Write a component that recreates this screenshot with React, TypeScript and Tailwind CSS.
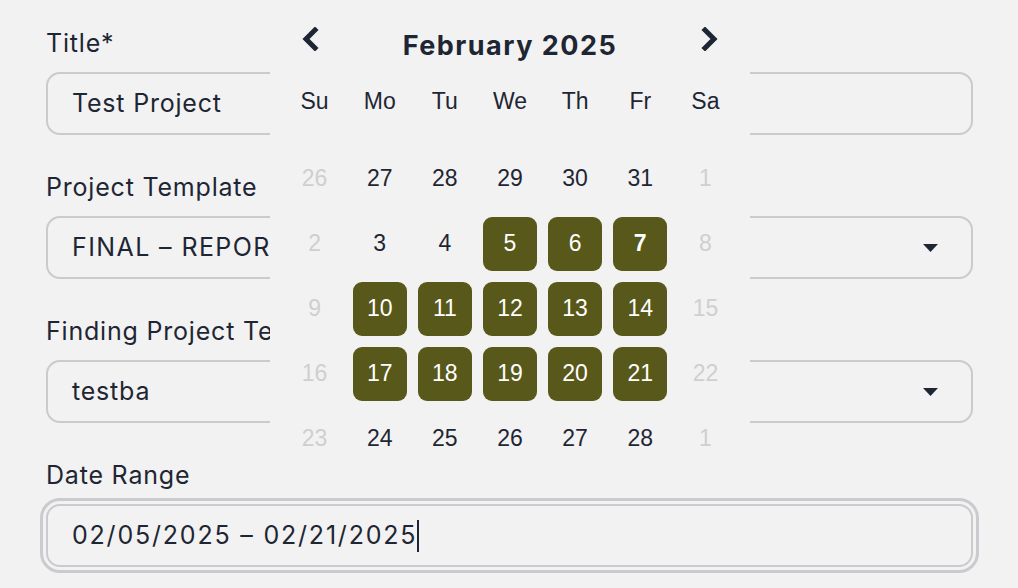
import React from "react";

const fieldFont = "font-['Inter','Noto_Sans',sans-serif]";
const calFont = "font-['Liberation_Sans','Arial',sans-serif]";

const weekdays = ["Su", "Mo", "Tu", "We", "Th", "Fr", "Sa"];

type Day = { n: number; muted?: boolean; selected?: boolean; bold?: boolean };

const weeks: Day[][] = [
  [{ n: 26, muted: true }, { n: 27 }, { n: 28 }, { n: 29 }, { n: 30 }, { n: 31 }, { n: 1, muted: true }],
  [{ n: 2, muted: true }, { n: 3 }, { n: 4 }, { n: 5, selected: true }, { n: 6, selected: true }, { n: 7, selected: true, bold: true }, { n: 8, muted: true }],
  [{ n: 9, muted: true }, { n: 10, selected: true }, { n: 11, selected: true }, { n: 12, selected: true }, { n: 13, selected: true }, { n: 14, selected: true }, { n: 15, muted: true }],
  [{ n: 16, muted: true }, { n: 17, selected: true }, { n: 18, selected: true }, { n: 19, selected: true }, { n: 20, selected: true }, { n: 21, selected: true }, { n: 22, muted: true }],
  [{ n: 23, muted: true }, { n: 24 }, { n: 25 }, { n: 26 }, { n: 27 }, { n: 28 }, { n: 1, muted: true }],
];

const Caret = () => (
  <svg width="15" height="8" viewBox="0 0 15 8" className="shrink-0">
    <path d="M0 0 H15 L7.5 8 Z" fill="#1f2633" />
  </svg>
);

const Chevron = ({ dir }: { dir: "left" | "right" }) => (
  <svg width="18" height="24" viewBox="0 0 18 24">
    <path
      d={dir === "left" ? "M14 3 L5 12 L14 21" : "M4 3 L13 12 L4 21"}
      fill="none"
      stroke="#1f2633"
      strokeWidth="5"
      strokeLinecap="square"
      strokeLinejoin="miter"
    />
  </svg>
);

const Field = ({
  label,
  children,
}: {
  label: string;
  children: React.ReactNode;
}) => (
  <div className="flex flex-col">
    <label className="text-[25px] leading-[32px] tracking-[0.8px] text-[#1f2633] mb-[13px] whitespace-nowrap">
      {label}
    </label>
    {children}
  </div>
);

const inputBox =
  "h-[63px] w-full rounded-[14px] border-2 border-[#cbcbcf] bg-[#f2f2f2] pl-[24px] flex items-center text-[25px] tracking-[0.8px] text-[#1f2633] whitespace-nowrap";

export default function App() {
  return (
    <div className={`relative w-[1018px] h-[588px] overflow-hidden bg-[#f2f2f2] ${fieldFont}`}>
      <div className="flex flex-col gap-[36px] pt-[27px] pl-[46px] pr-[45px]">
        <Field label="Title*">
          <div className={inputBox}>Test Project</div>
        </Field>
        <Field label="Project Template">
          <div className={`${inputBox} justify-between pr-[33px]`}>
            <span className="tracking-[1.4px]">FINAL – REPORT</span>
            <Caret />
          </div>
        </Field>
        <Field label="Finding Project Template">
          <div className={`${inputBox} justify-between pr-[33px]`}>
            <span>testba</span>
            <Caret />
          </div>
        </Field>
        <Field label="Date Range">
          <div className={`${inputBox} outline-[3px] outline-offset-[3px] outline-solid outline-[#cbcbcf]`}>
            <span className="tracking-[1.8px]">02/05/2025 – 02/21/2025</span>
            <span className="w-[2px] h-[32px] bg-[#1f2633]" />
          </div>
        </Field>
      </div>

      {/* calendar popover */}
      <div className="absolute left-[270px] top-0 w-[480px] h-[462px] bg-[#f2f2f2] px-[12px]">
        <div className="flex items-center justify-between h-[81px] px-[19px]">
          <div className="-mt-[3px]">
            <Chevron dir="left" />
          </div>
          <div className="text-[27px] font-bold text-[#1f2633] tracking-[1.5px] mt-[12px]">February 2025</div>
          <div className="-mt-[3px]">
            <Chevron dir="right" />
          </div>
        </div>
        <div className={`grid grid-cols-7 h-[40px] items-center ${calFont}`}>
          {weekdays.map((w) => (
            <div key={w} className="text-center text-[23px] text-[#1f2633]">
              {w}
            </div>
          ))}
        </div>
        <div className={`mt-[25px] flex flex-col ${calFont}`}>
          {weeks.map((week, i) => (
            <div key={i} className="grid grid-cols-7 h-[65px]">
              {week.map((d, j) => (
                <div key={j} className="flex items-center justify-center">
                  <div
                    className={`w-[54px] h-[54px] rounded-[9px] flex items-center justify-center text-[23px] ${
                      d.selected
                        ? "bg-[#575819] text-white"
                        : d.muted
                        ? "text-[#cfcfcf]"
                        : "text-[#1f2633]"
                    } ${d.bold ? "font-bold" : ""}`}
                  >
                    {d.n}
                  </div>
                </div>
              ))}
            </div>
          ))}
        </div>
      </div>
    </div>
  );
}
